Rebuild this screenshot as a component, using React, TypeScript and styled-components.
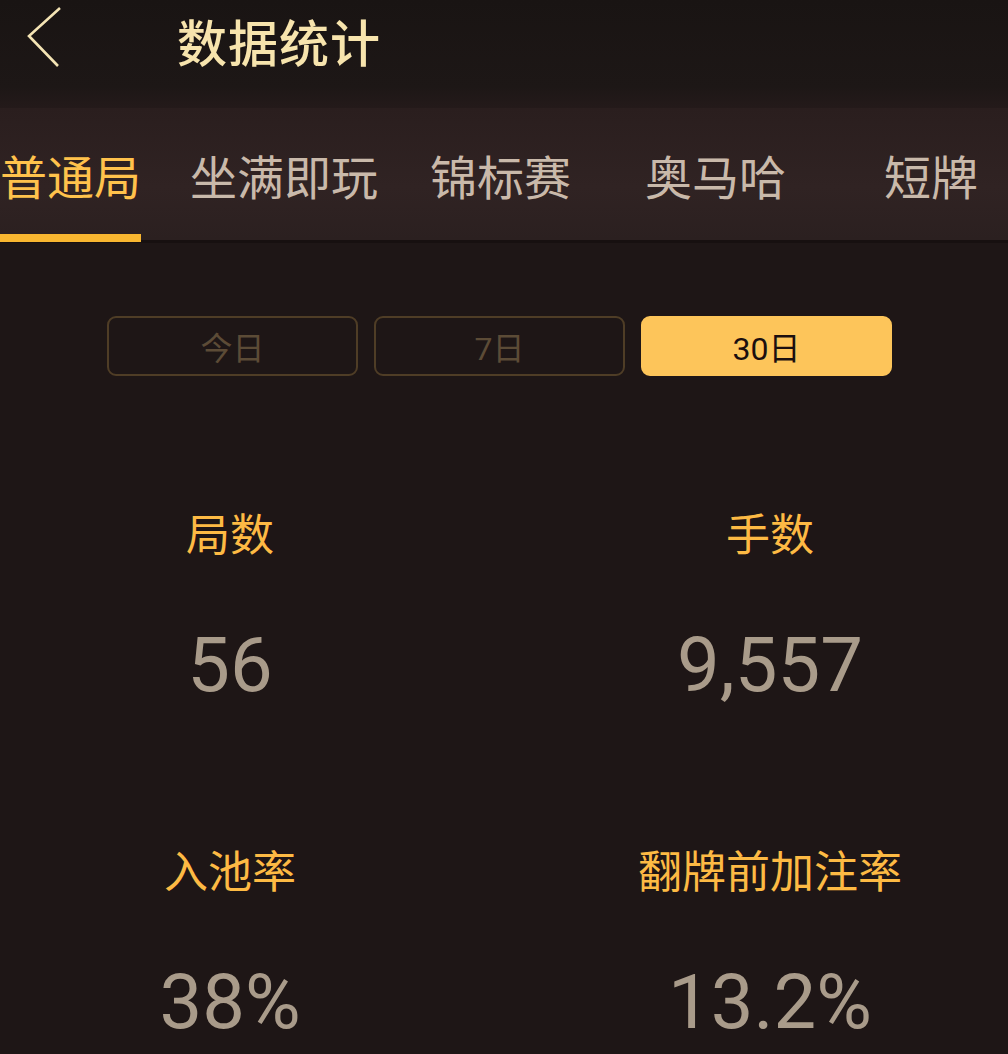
import React, { useState } from "react";
import styled, { createGlobalStyle } from "styled-components";

const GlobalStyle = createGlobalStyle`
  html, body {
    margin: 0;
    padding: 0;
    background: #1e1616;
  }
  body {
    font-family: Roboto, "Noto Sans CJK SC", sans-serif;
    overflow: hidden;
  }
`;

const Page = styled.div`
  width: 1008px;
  height: 1054px;
  background: #1e1616;
  overflow: hidden;
`;

const Header = styled.div`
  height: 108px;
  display: flex;
  align-items: flex-start;
  background: linear-gradient(#191413, #1d1716 80%, #241a1a);
`;

const BackButton = styled.button`
  width: 86px;
  height: 80px;
  padding: 6px 0 0 26px;
  margin: 0;
  border: none;
  background: transparent;
  display: flex;
  align-items: flex-start;
`;

const Title = styled.h1`
  margin: 10px 0 0 91px;
  font-family: "Noto Sans CJK SC", sans-serif;
  font-size: 50px;
  font-weight: 500;
  line-height: 60px;
  color: #f7e4ad;
  letter-spacing: 1px;
`;

const TabBar = styled.div`
  height: 132px;
  display: flex;
  align-items: stretch;
  background: linear-gradient(#2a1e1e, #302323 60%, #2b2020);
  border-bottom: 3px solid #171010;
`;

const Tab = styled.div<{ $active?: boolean; $space: number }>`
  position: relative;
  margin-left: ${(p) => p.$space}px;
  padding-top: 34px;
  font-family: "Noto Sans CJK SC", sans-serif;
  font-size: 47px;
  line-height: 66px;
  color: ${(p) => (p.$active ? "#ffc24c" : "#c9b9aa")};
  white-space: nowrap;
  &::after {
    content: "";
    display: ${(p) => (p.$active ? "block" : "none")};
    position: absolute;
    left: 0;
    right: 0;
    bottom: -2px;
    height: 8px;
    background: #f8b630;
  }
`;

const RangeRow = styled.div`
  display: flex;
  justify-content: center;
  gap: 16px;
  margin-top: 73px;
  padding-right: 9px;
`;

const RangeButton = styled.button<{ $active?: boolean }>`
  width: 251px;
  height: 60px;
  box-sizing: border-box;
  border-radius: 9px;
  border: 2px solid ${(p) => (p.$active ? "#fdc55a" : "#4f3d26")};
  background: ${(p) => (p.$active ? "#fdc55a" : "transparent")};
  color: ${(p) => (p.$active ? "#1b0f0f" : "#5c4b36")};
  font-family: Roboto, "Noto Sans CJK SC", sans-serif;
  font-size: 32px;
  padding: 0;
  cursor: pointer;
`;

const StatGrid = styled.div`
  display: grid;
  grid-template-columns: 300px 300px;
  column-gap: 240px;
  padding-left: 80px;
  margin-top: 124px;
`;

const Stat = styled.div`
  display: flex;
  flex-direction: column;
  align-items: center;
  height: 337px;
`;

const StatLabel = styled.div`
  font-family: "Noto Sans CJK SC", sans-serif;
  font-size: 44px;
  line-height: 64px;
  color: #fdba44;
  white-space: nowrap;
`;

const StatValue = styled.div`
  margin-top: 56px;
  font-family: Roboto, sans-serif;
  font-size: 76px;
  line-height: 90px;
  color: #a99b8a;
  white-space: nowrap;
`;

const TABS = [
  { name: "普通局", space: 0 },
  { name: "坐满即玩", space: 49 },
  { name: "锦标赛", space: 52 },
  { name: "奥马哈", space: 74 },
  { name: "短牌", space: 98 },
];

const RANGES = ["今日", "7日", "30日"];

const STATS = [
  { label: "局数", value: "56" },
  { label: "手数", value: "9,557" },
  { label: "入池率", value: "38%" },
  { label: "翻牌前加注率", value: "13.2%" },
];

export default function App() {
  const [tab, setTab] = useState(0);
  const [range, setRange] = useState(2);

  return (
    <Page>
      <GlobalStyle />
      <Header>
        <BackButton aria-label="返回">
          <svg width="40" height="62" viewBox="0 0 40 62">
            <polyline
              points="34,2 3,30 32,60"
              fill="none"
              stroke="#f4e4b4"
              strokeWidth="2.6"
            />
          </svg>
        </BackButton>
        <Title>数据统计</Title>
      </Header>

      <TabBar>
        {TABS.map((t, i) => (
          <Tab key={t.name} $space={t.space} $active={tab === i} onClick={() => setTab(i)}>
            {t.name}
          </Tab>
        ))}
      </TabBar>

      <RangeRow>
        {RANGES.map((r, i) => (
          <RangeButton key={r} $active={range === i} onClick={() => setRange(i)}>
            {r}
          </RangeButton>
        ))}
      </RangeRow>

      <StatGrid>
        {STATS.map((s) => (
          <Stat key={s.label}>
            <StatLabel>{s.label}</StatLabel>
            <StatValue>{s.value}</StatValue>
          </Stat>
        ))}
      </StatGrid>
    </Page>
  );
}
